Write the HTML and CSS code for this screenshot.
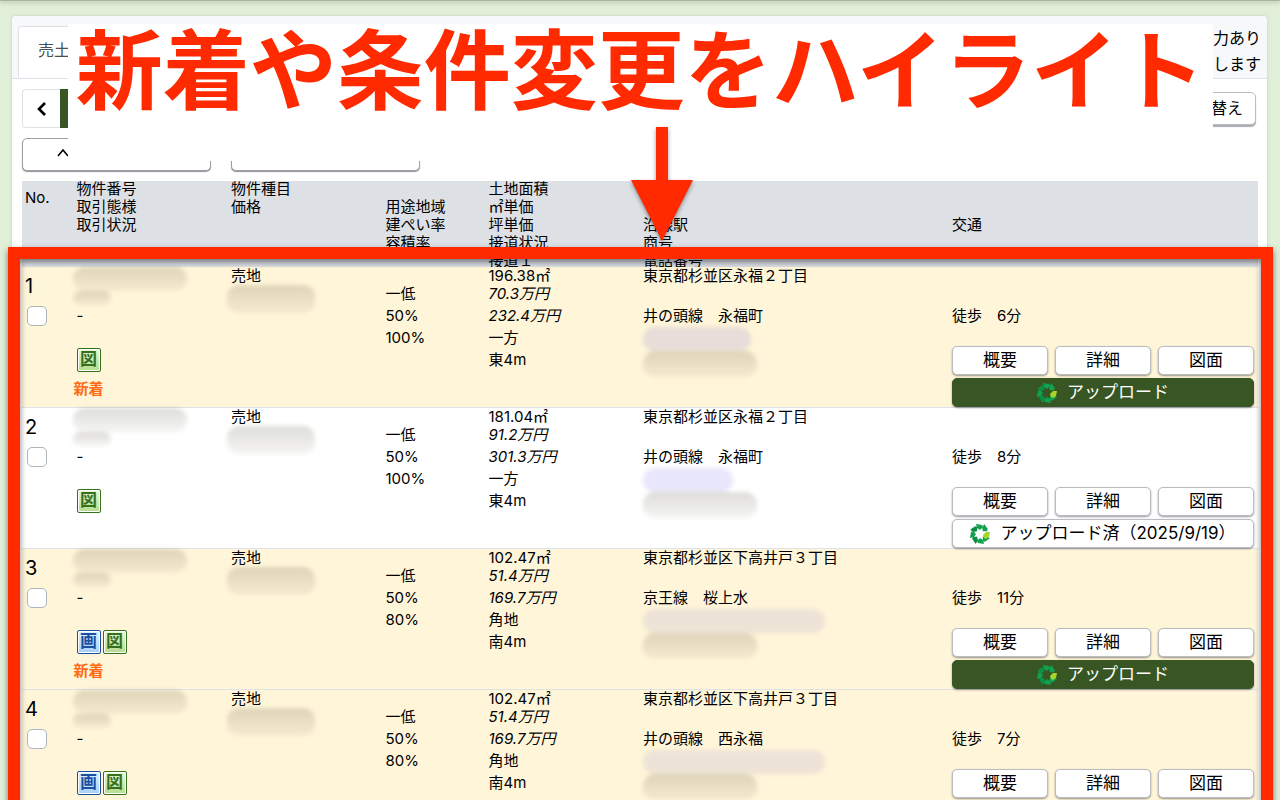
FILE: index.html
```html
<!DOCTYPE html>
<html lang="ja">
<head>
    <meta charset="UTF-8">
    <meta name="viewport" content="width=device-width, initial-scale=1.0">
    <title>物件一覧</title>
    <link rel="stylesheet" href="styles.css">
</head>
<body>
    <svg class="defs" aria-hidden="true">
        <symbol id="wheel" viewBox="-10 -10 20 20">
            <g fill="#12a150">
                <path id="leaf" d="M-4 -10 L2 -9 L3 -7 L0 -4 L-3 -6 Z"/>
                <use href="#leaf" transform="rotate(-45)" fill="#0b8f45"/>
                <use href="#leaf" transform="rotate(-90)"/>
                <use href="#leaf" transform="rotate(-135)" fill="#0b8f45"/>
                <use href="#leaf" transform="rotate(180)"/>
                <use href="#leaf" transform="rotate(135)"/>
                <use href="#leaf" transform="rotate(45)"/>
            </g>
            <path d="M3 1 L6 -2 L10 -2 L9 3 L6 5 L4 4 Z" fill="#a4d62a"/>
        </symbol>
    </svg>

    <div class="page">
        <div class="topbar"></div>

        <main class="card">
            <div class="card-header">
                <a class="tab" href="#">売土</a>
                <p class="note">力あり<br>します</p>
            </div>

            <div class="card-body">
                <div class="toolbar">
                    <div class="pager">
                        <button class="pager-prev" aria-label="前へ">
                            <svg width="12" height="16" viewBox="0 0 12 16"><path d="M9 2 L3 8 L9 14" fill="none" stroke="#000" stroke-width="2.6"/></svg>
                        </button>
                        <button class="pager-current" aria-label="現在のページ"></button>
                    </div>
                    <button class="btn btn-sort">替え</button>
                </div>

                <div class="filters">
                    <button class="btn btn-filter" aria-label="閉じる">
                        <svg width="12" height="8" viewBox="0 0 12 8"><path d="M1 7 L6 1 L11 7" fill="none" stroke="#000" stroke-width="1.6"/></svg>
                    </button>
                    <button class="btn btn-filter" aria-label="条件"></button>
                </div>

                <table class="listing">
                    <colgroup>
                        <col class="w1"><col class="w3"><col class="w3"><col class="w2"><col class="w3"><col class="w6"><col class="w6">
                    </colgroup>
                    <thead>
                        <tr>
                            <th><div class="head head-no">No.</div></th>
                            <th><div class="head">物件番号<br>取引態様<br>取引状況</div></th>
                            <th><div class="head">物件種目<br>価格</div></th>
                            <th><div class="head"><br>用途地域<br>建ぺい率<br>容積率</div></th>
                            <th><div class="head">土地面積<br>㎡単価<br>坪単価<br>接道状況<br>接道１</div></th>
                            <th><div class="head"><br><br>沿線駅<br>商号<br>電話番号</div></th>
                            <th><div class="head"><br><br>交通</div></th>
                        </tr>
                    </thead>
                    <tbody>
                        <tr class="changed">
                            <td>
                                <label class="no" for="row1">1</label>
                                <input type="checkbox" class="check" id="row1">
                            </td>
                            <td>
                                <div class="lines">
                                    <div class="pair"><i class="smudge id-a"></i><i class="smudge id-b"></i></div>
                                    <div class="line line-mid">-</div>
                                    <div class="tags"><span class="tag tag-map">図</span></div>
                                </div>
                                <strong class="new">新着</strong>
                            </td>
                            <td><div class="lines"><div class="line line-top">売地</div><i class="smudge price"></i></div></td>
                            <td><div class="lines lines-low">
                                <div class="line line-top">一低</div><div class="line line-mid">50%</div><div class="line">100%</div>
                            </div></td>
                            <td><div class="lines">
                                <div class="line line-top">196.38㎡</div><div class="line line-top"><em>70.3万円</em></div>
                                <div class="line line-mid"><em>232.4万円</em></div><div class="line">一方</div><div class="line">東4m</div>
                            </div></td>
                            <td><div class="lines">
                                <div class="line line-top">東京都杉並区永福２丁目</div><div class="line line-top"></div>
                                <div class="line line-mid">井の頭線　永福町</div>
                                <i class="smudge firm"></i><i class="smudge tel"></i>
                            </div></td>
                            <td>
                                <div class="access">徒歩　6分</div>
                                <div class="actions">
                                    <button class="btn">概要</button><button class="btn">詳細</button><button class="btn">図面</button>
                                    <button class="btn btn-upload"><svg class="wheel"><use href="#wheel"/></svg>アップロード</button>
                                </div>
                            </td>
                        </tr>
                        <tr>
                            <td>
                                <label class="no" for="row2">2</label>
                                <input type="checkbox" class="check" id="row2">
                            </td>
                            <td>
                                <div class="lines">
                                    <div class="pair"><i class="smudge id-a"></i><i class="smudge id-b"></i></div>
                                    <div class="line line-mid">-</div>
                                    <div class="tags"><span class="tag tag-map">図</span></div>
                                </div>
                            </td>
                            <td><div class="lines"><div class="line line-top">売地</div><i class="smudge price"></i></div></td>
                            <td><div class="lines lines-low">
                                <div class="line line-top">一低</div><div class="line line-mid">50%</div><div class="line">100%</div>
                            </div></td>
                            <td><div class="lines">
                                <div class="line line-top">181.04㎡</div><div class="line line-top"><em>91.2万円</em></div>
                                <div class="line line-mid"><em>301.3万円</em></div><div class="line">一方</div><div class="line">東4m</div>
                            </div></td>
                            <td><div class="lines">
                                <div class="line line-top">東京都杉並区永福２丁目</div><div class="line line-top"></div>
                                <div class="line line-mid">井の頭線　永福町</div>
                                <i class="smudge firm firm-short"></i><i class="smudge tel"></i>
                            </div></td>
                            <td>
                                <div class="access">徒歩　8分</div>
                                <div class="actions">
                                    <button class="btn">概要</button><button class="btn">詳細</button><button class="btn">図面</button>
                                    <button class="btn btn-done"><svg class="wheel"><use href="#wheel"/></svg>アップロード済（2025/9/19）</button>
                                </div>
                            </td>
                        </tr>
                        <tr class="changed">
                            <td>
                                <label class="no" for="row3">3</label>
                                <input type="checkbox" class="check" id="row3">
                            </td>
                            <td>
                                <div class="lines">
                                    <div class="pair"><i class="smudge id-a"></i><i class="smudge id-b"></i></div>
                                    <div class="line line-mid">-</div>
                                    <div class="tags"><span class="tag tag-photo">画</span><span class="tag tag-map">図</span></div>
                                </div>
                                <strong class="new">新着</strong>
                            </td>
                            <td><div class="lines"><div class="line line-top">売地</div><i class="smudge price"></i></div></td>
                            <td><div class="lines lines-low">
                                <div class="line line-top">一低</div><div class="line line-mid">50%</div><div class="line">80%</div>
                            </div></td>
                            <td><div class="lines">
                                <div class="line line-top">102.47㎡</div><div class="line line-top"><em>51.4万円</em></div>
                                <div class="line line-mid"><em>169.7万円</em></div><div class="line">角地</div><div class="line">南4m</div>
                            </div></td>
                            <td><div class="lines">
                                <div class="line line-top">東京都杉並区下高井戸３丁目</div><div class="line line-top"></div>
                                <div class="line line-mid">京王線　桜上水</div>
                                <i class="smudge firm firm-long"></i><i class="smudge tel"></i>
                            </div></td>
                            <td>
                                <div class="access">徒歩　11分</div>
                                <div class="actions">
                                    <button class="btn">概要</button><button class="btn">詳細</button><button class="btn">図面</button>
                                    <button class="btn btn-upload"><svg class="wheel"><use href="#wheel"/></svg>アップロード</button>
                                </div>
                            </td>
                        </tr>
                        <tr class="changed">
                            <td>
                                <label class="no" for="row4">4</label>
                                <input type="checkbox" class="check" id="row4">
                            </td>
                            <td>
                                <div class="lines">
                                    <div class="pair"><i class="smudge id-a"></i><i class="smudge id-b"></i></div>
                                    <div class="line line-mid">-</div>
                                    <div class="tags"><span class="tag tag-photo">画</span><span class="tag tag-map">図</span></div>
                                </div>
                            </td>
                            <td><div class="lines"><div class="line line-top">売地</div><i class="smudge price"></i></div></td>
                            <td><div class="lines lines-low">
                                <div class="line line-top">一低</div><div class="line line-mid">50%</div><div class="line">80%</div>
                            </div></td>
                            <td><div class="lines">
                                <div class="line line-top">102.47㎡</div><div class="line line-top"><em>51.4万円</em></div>
                                <div class="line line-mid"><em>169.7万円</em></div><div class="line">角地</div><div class="line">南4m</div>
                            </div></td>
                            <td><div class="lines">
                                <div class="line line-top">東京都杉並区下高井戸３丁目</div><div class="line line-top"></div>
                                <div class="line line-mid">井の頭線　西永福</div>
                                <i class="smudge firm firm-long"></i><i class="smudge tel"></i>
                            </div></td>
                            <td>
                                <div class="access">徒歩　7分</div>
                                <div class="actions">
                                    <button class="btn">概要</button><button class="btn">詳細</button><button class="btn">図面</button>
                                </div>
                            </td>
                        </tr>
                    </tbody>
                </table>
            </div>
        </main>

        <!-- Callout laid over the list -->
        <div class="banner">新着や条件変更をハイライト</div>
        <div class="frame"></div>
        <svg class="arrow" width="62" height="114" viewBox="0 0 62 114"><path d="M25 0 H37 V53 H62 L31 114 L0 53 H25 Z" fill="#ff2a00"/></svg>
    </div>
</body>
</html>
```
FILE: styles.css
```css
* {
    box-sizing: border-box;
}

body {
    margin: 0;
    font-family: Inter, "Noto Sans CJK JP", sans-serif;
    font-size: 15px;
    line-height: 18px;
    color: #000;
    background-color: #e1efd9;
}

.page {
    position: relative;
    height: 100vh;
    overflow: hidden;
}

.defs {
    position: absolute;
    width: 0;
    height: 0;
}

.topbar {
    height: 1px;
    background-color: #a9b3a2;
    box-shadow: 0 1px 4px rgba(0, 0, 0, 0.5);
}

.card {
    margin: 15px 13px 0 12px;
    background-color: #fff;
    border-radius: 4px;
    box-shadow: 0 0 3px rgba(0, 0, 0, 0.15);
}

.card-header {
    display: flex;
    justify-content: space-between;
    align-items: flex-end;
    height: 63px;
    padding: 0 6px;
    background-color: #f7f8fa;
    border-bottom: 1px solid #dee2e6;
    border-radius: 4px 4px 0 0;
}

.tab {
    height: 52px;
    padding: 14px 19px;
    font-size: 16px;
    color: #495057;
    text-decoration: none;
    background-color: #fff;
    border: 1px solid #dee2e6;
    border-bottom: none;
    border-radius: 4px 4px 0 0;
}

.note {
    margin: 0;
    padding-bottom: 1px;
    font-size: 16px;
    line-height: 26px;
}

.card-body {
    padding: 10px 9px 0 10px;
}

.toolbar {
    display: flex;
    justify-content: space-between;
    align-items: center;
    height: 39px;
    padding-right: 2px;
}

.pager {
    display: flex;
    height: 39px;
}

.pager-prev {
    width: 38px;
    padding: 0;
    background-color: #fff;
    border: 1px solid #dee2e6;
    border-right: none;
    border-radius: 4px 0 0 4px;
}

.pager-prev svg {
    display: block;
    margin: 0 auto;
}

.pager-current {
    width: 40px;
    background-color: #375623;
    border: none;
}

.btn {
    height: 29px;
    padding: 0 8px 2px;
    font-family: inherit;
    font-size: 17px;
    line-height: 24px;
    color: #000;
    white-space: nowrap;
    background-color: #fff;
    border: 1px solid #b9bdc3;
    border-radius: 5px;
    box-shadow: 0 1px 2px rgba(0, 0, 0, 0.4);
}

.btn-sort {
    width: 96px;
    height: 33px;
    padding: 0 12px 2px;
    font-size: 16px;
    text-align: right;
    box-shadow: 0 2px 1px #a9acb2;
}

.filters {
    display: flex;
    gap: 20px;
    margin: 10px 0;
}

.btn-filter {
    width: 189px;
    height: 33px;
    padding: 0 34px 3px;
    text-align: left;
    border-color: #9da1a7;
    box-shadow: 0 1px 1px #8d9197;
}

.btn-filter svg {
    display: block;
}

/* 24-unit column grid */
.listing {
    width: 100%;
    table-layout: fixed;
    border-collapse: separate;
    border-spacing: 0;
}

.w1 { width: calc(100% / 24); }
.w2 { width: calc(100% / 12); }
.w3 { width: 12.5%; }
.w6 { width: 25%; }

.listing th,
.listing td {
    padding: 0;
    font-weight: normal;
    text-align: left;
    vertical-align: top;
    white-space: nowrap;
}

.listing th {
    background-color: #dde1e6;
}

.head {
    height: 87px;
    margin-top: -1px;
    padding-left: 3px;
    overflow: hidden;
}

.head-no {
    padding-top: 9px;
}

.listing td {
    height: 141px;
    border-bottom: 1px solid #dfe2e6;
}

.changed td {
    background-color: #fff5d9;
}

.no {
    display: block;
    padding: 8px 0 0 3px;
    font-size: 20px;
    line-height: 22px;
}

.check {
    display: block;
    appearance: none;
    width: 20px;
    height: 20px;
    margin: 9px 0 0 5px;
    background-color: #fff;
    border: 1px solid #adb5bd;
    border-radius: 5px;
}

.lines {
    padding-left: 3px;
}

.lines-low {
    margin-top: 18px;
}

.line {
    height: 22px;
    line-height: 22px;
}

.line-top {
    height: 18px;
    line-height: 18px;
}

.line-mid {
    height: 24px;
    line-height: 25px;
}

.pair {
    height: 36px;
}

.tags {
    display: flex;
    gap: 2px;
    padding-top: 21px;
}

.tag {
    width: 24px;
    height: 24px;
    font-size: 17px;
    font-weight: bold;
    line-height: 21px;
    text-align: center;
    border: 1px solid;
    border-radius: 2px;
    box-shadow: inset 0 0 0 1px #fff;
}

.tag-map {
    color: #35701e;
    background: linear-gradient(#eaf7dc, #b4dc8e);
}

.tag-photo {
    color: #1c4fa0;
    background: linear-gradient(#e2f1ff, #a4d0f8);
}

.new {
    display: block;
    padding-top: 8px;
    color: #ff6a13;
}

/* Blurred-out private data */
.smudge {
    display: block;
    background: linear-gradient(rgba(90, 85, 65, 0.2), rgba(90, 85, 65, 0.06));
    border-radius: 12px;
    filter: blur(2px);
}

.id-a {
    width: 114px;
    height: 24px;
    margin-left: -4px;
}

.id-b {
    width: 38px;
    height: 14px;
    margin-left: -4px;
}

.price {
    width: 88px;
    height: 28px;
    margin-left: -4px;
}

.firm {
    width: 108px;
    height: 24px;
    background: rgba(90, 80, 220, 0.14);
}

.firm-short {
    width: 90px;
}

.firm-long {
    width: 182px;
    background: rgba(120, 110, 200, 0.13);
}

.tel {
    width: 114px;
    height: 26px;
}

.access {
    height: 79px;
    padding: 36px 0 0 3px;
    line-height: 25px;
}

.actions {
    display: grid;
    grid-template-columns: repeat(3, 1fr);
    gap: 3px 7px;
    padding: 0 4px 0 3px;
}

.btn-upload,
.btn-done {
    display: flex;
    grid-column: 1 / -1;
    justify-content: center;
    align-items: center;
    gap: 10px;
}

.btn-upload {
    color: #fff;
    background-color: #375623;
    border-color: #375623;
}

.wheel {
    width: 20px;
    height: 20px;
    margin-top: 2px;
}

.banner {
    position: absolute;
    top: 24px;
    right: 67px;
    left: 68px;
    height: 137px;
    font-size: 87px;
    font-weight: bold;
    line-height: 96px;
    color: #ff2a00;
    text-align: center;
    white-space: nowrap;
    background-color: #fff;
}

.frame {
    position: absolute;
    top: 247px;
    right: 7px;
    bottom: -20px;
    left: 8px;
    border: 12px solid #ff2a00;
    filter: drop-shadow(0 3px 3px rgba(0, 0, 0, 0.5));
}

.arrow {
    position: absolute;
    top: 127px;
    left: calc(50% - 9px);
    filter: drop-shadow(0 2px 2px rgba(0, 0, 0, 0.4));
}
```
